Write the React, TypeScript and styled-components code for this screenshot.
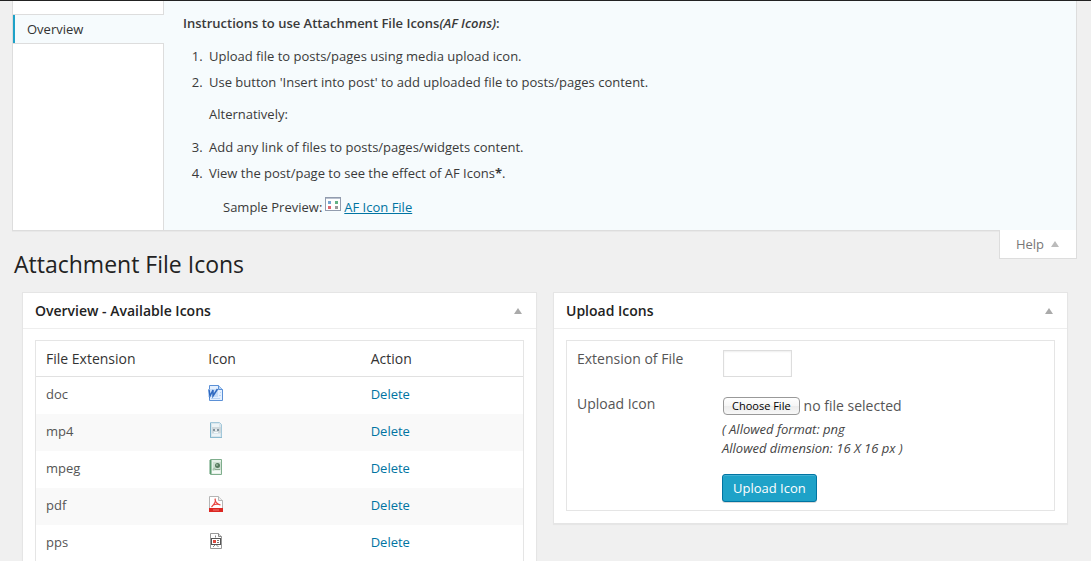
import React, { useRef, useState } from 'react';
import styled, { createGlobalStyle } from 'styled-components';

const GlobalStyle = createGlobalStyle`
  *, *::before, *::after { box-sizing: border-box; }
  body {
    margin: 0;
    background: #f0f0f0;
    color: #444;
    font: 13px/19px "Open Sans", "Noto Sans", sans-serif;
  }
  h1, h2, p, ol { margin: 0; padding: 0; }
  button, input { font-family: inherit; }
  a { color: #0074a2; }
`;

const Page = styled.div`
  border-top: 1px solid #222;
  padding: 0 14px 0 12px;
`;

const HelpPanel = styled.section`
  display: flex;
  background: #f6fbfd;
  border: 1px solid #ddd;
  border-top: 0;
  box-shadow: 0 1px 0 rgba(0, 0, 0, 0.03);
`;

const HelpTabs = styled.nav`
  flex: none;
  width: 151px;
  padding-top: 13px;
  background: #fff;
  border-right: 1px solid #ddd;
`;

const HelpTab = styled.a`
  display: block;
  margin-right: -1px;
  padding: 5px 12px 4px 14px;
  background: #f6fbfd;
  border: solid #ddd;
  border-width: 1px 0;
  box-shadow: inset 2px 0 0 #1ea2c8;
  color: #333;
  text-decoration: none;
`;

const HelpContent = styled.div`
  flex: 1;
  padding: 13px 20px 13px 19px;
  color: #3a3a3a;
`;

const Instructions = styled.h2`
  font-size: 13px;
  font-weight: 600;
  line-height: 19px;
`;

const Steps = styled.ol`
  margin: 14px 0 0 23px;
`;

const Step = styled.li`
  margin-bottom: 7px;
  padding-left: 3px;
`;

const Aside = styled.p`
  padding: 13px 0 7px;
`;

const Sample = styled.p`
  margin: 14px 0 0 40px;
  display: flex;
  align-items: center;
  gap: 3px;
  svg { margin-bottom: 6px; }
`;

const TitleBar = styled.header`
  display: flex;
  justify-content: space-between;
  align-items: flex-start;
  height: 61px;
`;

const Title = styled.h1`
  padding: 19px 0 0 2px;
  color: #222;
  font-size: 23px;
  font-weight: 400;
  line-height: 29px;
`;

const HelpButton = styled.button`
  display: flex;
  align-items: center;
  gap: 7px;
  height: 29px;
  margin-top: -1px;
  padding: 0 17px 0 16px;
  background: #fff;
  border: 1px solid #ddd;
  border-top: 0;
  color: #777;
  font-size: 13px;
  line-height: 22px;
`;

const Columns = styled.main`
  display: grid;
  grid-template-columns: 1fr 1fr;
  align-items: start;
  gap: 16px;
  padding: 0 9px 0 10px;
`;

const Card = styled.section`
  background: #fff;
  border: 1px solid #e5e5e5;
  box-shadow: 0 1px 1px rgba(0, 0, 0, 0.04);
`;

const CardHeader = styled.header`
  display: flex;
  align-items: center;
  justify-content: space-between;
  height: 36px;
  padding: 0 14px 0 12px;
  border-bottom: 1px solid #eee;
`;

const CardTitle = styled.h2`
  color: #222;
  font-size: 14px;
  font-weight: 600;
  line-height: 20px;
`;

const ToggleButton = styled.button`
  display: flex;
  padding: 0;
  border: 0;
  background: none;
`;

const CardBody = styled.div`
  padding: 11px 12px 12px;
`;

const IconTable = styled.table`
  width: 100%;
  table-layout: fixed;
  border: 1px solid #e5e5e5;
  border-spacing: 0;
  a { text-decoration: none; }
`;

const HeadCell = styled.th`
  height: 36px;
  padding: 0 10px;
  border-bottom: 1px solid #e1e1e1;
  color: #333;
  font-size: 14px;
  font-weight: 400;
  text-align: left;
`;

const Row = styled.tr<{ $shaded: boolean }>`
  background: ${({ $shaded }) => ($shaded ? '#f9f9f9' : '#fff')};
`;

const Cell = styled.td`
  height: 37px;
  padding: 0 10px 3px;
  color: #555;
  font-size: 13px;
  svg { display: block; margin-bottom: 2px; }
`;

const UploadForm = styled.form`
  display: grid;
  grid-template-columns: 145px 1fr;
  align-items: start;
  padding: 8px 10px;
  border: 1px solid #e5e5e5;
  font-size: 14px;
  color: #555;
`;

const FieldLabel = styled.label`
  line-height: 20px;
`;

const ExtensionInput = styled.input`
  display: block;
  width: 69px;
  height: 27px;
  margin: 1px 1px 17px;
  padding: 3px 5px;
  border: 1px solid #ddd;
  box-shadow: inset 0 1px 2px rgba(0, 0, 0, 0.07);
  background: #fff;
`;

const FilePicker = styled.div`
  display: flex;
  align-items: center;
  gap: 4px;
  padding: 1px 1px 0;
  line-height: 22px;
`;

const ChooseButton = styled.button`
  height: 18px;
  padding: 0 8px;
  border: 1px solid #999;
  border-radius: 4px;
  background: linear-gradient(#fff, #f6f6f6 50%, #ececec 51%, #f8f8f8);
  color: #000;
  font-size: 11px;
  font-weight: 500;
  line-height: 16px;
`;

const Hint = styled.p`
  padding-top: 3px;
  color: #444;
  font-size: 13px;
  font-style: italic;
  line-height: 19px;
`;

const SubmitButton = styled.button`
  height: 28px;
  margin: 16px 0 0;
  padding: 0 10px;
  border: 1px solid #0074a2;
  border-radius: 3px;
  background: #1ea2c8;
  box-shadow: inset 0 1px 0 rgba(120, 200, 230, 0.4), 0 1px 0 rgba(0, 0, 0, 0.15);
  color: #fff;
  font-size: 13px;
  font-weight: 500;
  line-height: 26px;
`;

function UpArrow({ color = '#aaa' }: { color?: string }) {
  return (
    <svg width="8" height="6" viewBox="0 0 8 6" aria-hidden="true">
      <path d="M4 0 8 6H0Z" fill={color} />
    </svg>
  );
}

function PreviewIcon() {
  return (
    <svg width="16" height="14" viewBox="0 0 16 14" aria-hidden="true">
      <rect x=".5" y=".5" width="15" height="13" fill="#fff" stroke="#929cae" />
      <path d="M1 1.5h14" stroke="#b9c2d0" />
      <path d="M3 4h3v3H3z" fill="#75a5d0" />
      <path d="M10 4h3v3h-3z" fill="#62b384" />
      <path d="M3 9h3v3H3z" fill="#dc6570" />
      <path d="M10 9h3v3h-3z" fill="#999" />
    </svg>
  );
}

function DocIcon() {
  return (
    <svg width="16" height="16" viewBox="0 0 16 16" aria-hidden="true">
      <path d="M1.5.5h9l4 4v11h-13z" fill="#e4f0ff" stroke="#5b90d6" />
      <path d="M10.5.5v4h4" fill="#b9d6f7" stroke="#5b90d6" />
      <path d="M3 13.5h9M11 10.5h2M12 7.500h1" stroke="#b9d4f4" />
      <path d="M0 4h10v8H0z" fill="#c5dcf8" />
      <path d="M1 4.500 2 11l3-6v6l4.500-7" fill="none" stroke="#2f69c0" strokeWidth="1.500" />
    </svg>
  );
}

function Mp4Icon() {
  return (
    <svg width="16" height="16" viewBox="0 0 16 16" aria-hidden="true">
      <path d="M2.500.5h9l2 2v13h-11z" fill="#d9e6ed" stroke="#a3c8da" />
      <path d="M2.500 1v14" stroke="#7fb3cc" />
      <path d="M2 15.500h12" stroke="#8dbbd0" />
      <path d="M4 2h7v3H4zM4 12h8v2H4z" fill="#edf4f7" />
      <path d="M4 5h9v6H4z" fill="#cfd8dc" />
      <path d="M5 7h2v2H5zM9 7h2v2H9z" fill="#84949d" />
      <path d="M7 7h2v2H7z" fill="#e6ecef" />
      <path d="M6 10.500h4" stroke="#f6fafb" />
    </svg>
  );
}

function MpegIcon() {
  return (
    <svg width="16" height="16" viewBox="0 0 16 16" aria-hidden="true">
      <path d="M2.500.5h11v15h-11z" fill="#e6f1e8" stroke="#7fae8d" />
      <path d="M2.500 1v14" stroke="#5c9b70" strokeWidth="2" />
      <path d="M5 3h8v8H5z" fill="#cfe0d2" />
      <circle cx="9.500" cy="6.500" r="2.500" fill="#567a5d" />
      <circle cx="9" cy="6" r="1" fill="#9bb9a0" />
      <path d="M7 10.500h5" stroke="#8eac94" />
      <path d="m5 11 2-2" stroke="#a9c4ae" strokeWidth="2" />
      <path d="M4 13h8" stroke="#f7fbf8" strokeWidth="2" />
    </svg>
  );
}

function PdfIcon() {
  return (
    <svg width="16" height="16" viewBox="0 0 16 16" aria-hidden="true">
      <path d="M1.500.5h9l4 4v11h-13z" fill="#fff" stroke="#b5b5b5" />
      <path d="M10.500.5v4h4" fill="#eee" stroke="#b5b5b5" />
      <path d="M7 2.500c1.500 2.500-1 6-3.500 8.500M7 3c0 3 2 5 5.500 6M4.500 9.500C7 8 10 7.800 12.500 9" fill="none" stroke="#e8443f" strokeWidth="1.100" />
      <path d="M1 12h14v4H1z" fill="#dc2722" />
      <path d="M5 14h6" stroke="#ee7a75" />
    </svg>
  );
}

function PpsIcon() {
  return (
    <svg width="16" height="16" viewBox="0 0 16 16" aria-hidden="true">
      <path d="M2.500.5h8l3 3v12h-11z" fill="#fff" stroke="#999" />
      <path d="M10.500.5v3h3" fill="#ddd" stroke="#888" />
      <path d="M7.500 2.500v2M5 14l2-2M10.500 14l-2-2" stroke="#888" />
      <rect x="3.500" y="5.500" width="9" height="6" fill="#fff" stroke="#555" />
      <path d="M5 7h3v3H5z" fill="#df4a40" />
      <path d="M9 7.500h2M9 9.500h2" stroke="#777" />
    </svg>
  );
}

const fileIcons = [
  { extension: 'doc', Icon: DocIcon },
  { extension: 'mp4', Icon: Mp4Icon },
  { extension: 'mpeg', Icon: MpegIcon },
  { extension: 'pdf', Icon: PdfIcon },
  { extension: 'pps', Icon: PpsIcon },
];

export default function App() {
  const fileRef = useRef<HTMLInputElement>(null);
  const [fileName, setFileName] = useState('no file selected');

  return (
    <Page>
      <GlobalStyle />
      <HelpPanel>
        <HelpTabs>
          <HelpTab href="#overview">Overview</HelpTab>
        </HelpTabs>
        <HelpContent>
          <Instructions>
            Instructions to use Attachment File Icons<em>(AF Icons)</em>:
          </Instructions>
          <Steps>
            <Step>Upload file to posts/pages using media upload icon.</Step>
            <Step>
              Use button 'Insert into post' to add uploaded file to posts/pages content.
              <Aside>Alternatively:</Aside>
            </Step>
            <Step>Add any link of files to posts/pages/widgets content.</Step>
            <Step>View the post/page to see the effect of AF Icons<b>*</b>.</Step>
          </Steps>
          <Sample>
            Sample Preview: <PreviewIcon /> <a href="#sample">AF Icon File</a>
          </Sample>
        </HelpContent>
      </HelpPanel>

      <TitleBar>
        <Title>Attachment File Icons</Title>
        <HelpButton type="button">Help <UpArrow color="#bbb" /></HelpButton>
      </TitleBar>

      <Columns>
        <Card>
          <CardHeader>
            <CardTitle>Overview - Available Icons</CardTitle>
            <ToggleButton type="button" aria-label="Toggle panel"><UpArrow /></ToggleButton>
          </CardHeader>
          <CardBody>
            <IconTable>
              <thead>
                <tr>
                  <HeadCell scope="col">File Extension</HeadCell>
                  <HeadCell scope="col">Icon</HeadCell>
                  <HeadCell scope="col">Action</HeadCell>
                </tr>
              </thead>
              <tbody>
                {fileIcons.map(({ extension, Icon }, index) => (
                  <Row key={extension} $shaded={index % 2 === 1}>
                    <Cell>{extension}</Cell>
                    <Cell><Icon /></Cell>
                    <Cell><a href={`#delete-${extension}`}>Delete</a></Cell>
                  </Row>
                ))}
              </tbody>
            </IconTable>
          </CardBody>
        </Card>

        <Card>
          <CardHeader>
            <CardTitle>Upload Icons</CardTitle>
            <ToggleButton type="button" aria-label="Toggle panel"><UpArrow /></ToggleButton>
          </CardHeader>
          <CardBody>
            <UploadForm onSubmit={(event) => event.preventDefault()}>
              <FieldLabel htmlFor="extension">Extension of File</FieldLabel>
              <ExtensionInput id="extension" type="text" />
              <FieldLabel htmlFor="icon-file">Upload Icon</FieldLabel>
              <div>
                <FilePicker>
                  <input
                    id="icon-file"
                    ref={fileRef}
                    type="file"
                    accept="image/png"
                    hidden
                    onChange={(event) => setFileName(event.target.files?.[0]?.name ?? 'no file selected')}
                  />
                  <ChooseButton type="button" onClick={() => fileRef.current?.click()}>Choose File</ChooseButton>
                  <span>{fileName}</span>
                </FilePicker>
                <Hint>
                  ( Allowed format: png<br />
                  Allowed dimension: 16 X 16 px )
                </Hint>
                <SubmitButton type="submit">Upload Icon</SubmitButton>
              </div>
            </UploadForm>
          </CardBody>
        </Card>
      </Columns>
    </Page>
  );
}
